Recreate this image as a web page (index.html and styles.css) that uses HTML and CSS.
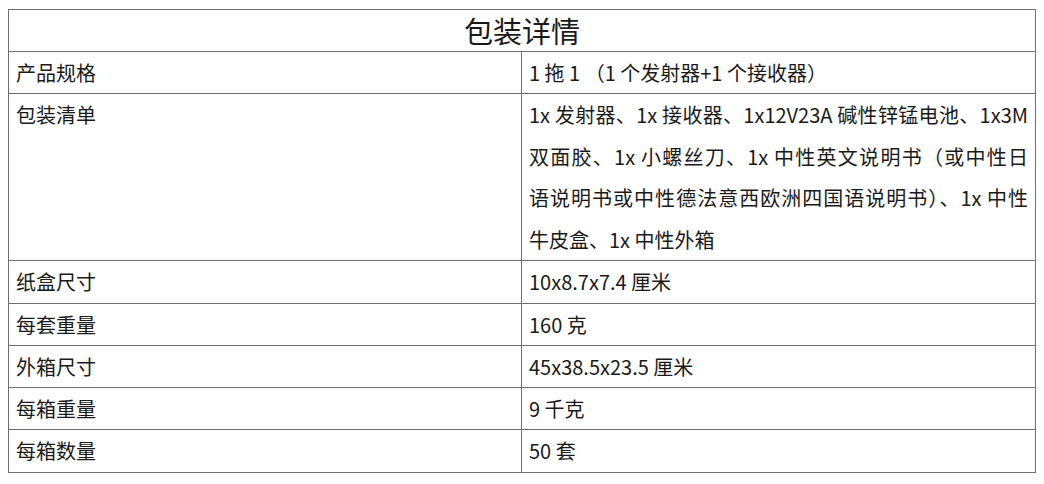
FILE: index.html
```html
<!DOCTYPE html>
<html lang="zh-CN">
<head>
<meta charset="utf-8">
<title>包装详情</title>
<link rel="stylesheet" href="styles.css">
</head>
<body>
<table class="spec">
  <colgroup><col class="col-key"><col></colgroup>
  <tr><th class="title" colspan="2">包装详情</th></tr>
  <tr><td class="key">产品规格</td><td class="val">1 拖 1 （1 个发射器+1 个接收器）</td></tr>
  <tr class="multi"><td class="key">包装清单</td><td class="val"><span class="ln full">1x 发射器、1x 接收器、1x12V23A 碱性锌锰电池、1x3M</span><span class="ln full">双面胶、1x 小螺丝刀、1x 中性英文说明书（或中性日</span><span class="ln full">语说明书或中性德法意西欧洲四国语说明书）、1x 中性</span><span class="ln">牛皮盒、1x 中性外箱</span></td></tr>
  <tr><td class="key">纸盒尺寸</td><td class="val">10x8.7x7.4 厘米</td></tr>
  <tr><td class="key">每套重量</td><td class="val">160 克</td></tr>
  <tr><td class="key">外箱尺寸</td><td class="val">45x38.5x23.5 厘米</td></tr>
  <tr><td class="key">每箱重量</td><td class="val">9 千克</td></tr>
  <tr><td class="key">每箱数量</td><td class="val">50 套</td></tr>
</table>
</body>
</html>
```
FILE: styles.css
```css
html, body {
  background: #ffffff;
}
body {
  margin: 9px 8px 0;
  font-family: "Noto Sans CJK SC", Lato, sans-serif;
  color: #1a1a1a;
}
.spec {
  width: 1028px;
  border-collapse: collapse;
  table-layout: fixed;
}
.col-key {
  width: 513px;
}
.spec th,
.spec td {
  border: 1px solid #6f6f6f;
  padding: 0 7px;
  vertical-align: top;
  text-align: left;
  font-weight: normal;
}
.title {
  height: 41px;
  line-height: 41px;
  font-size: 29px;
  text-align: center !important;
}
.key,
.val {
  height: 41.3px;
  line-height: 41.3px;
  font-size: 20px;
}
.multi .key,
.multi .val {
  line-height: 41.5px;
}
.ln {
  display: block;
  white-space: nowrap;
}
.ln.full {
  text-align: justify;
  text-align-last: justify;
}
```
